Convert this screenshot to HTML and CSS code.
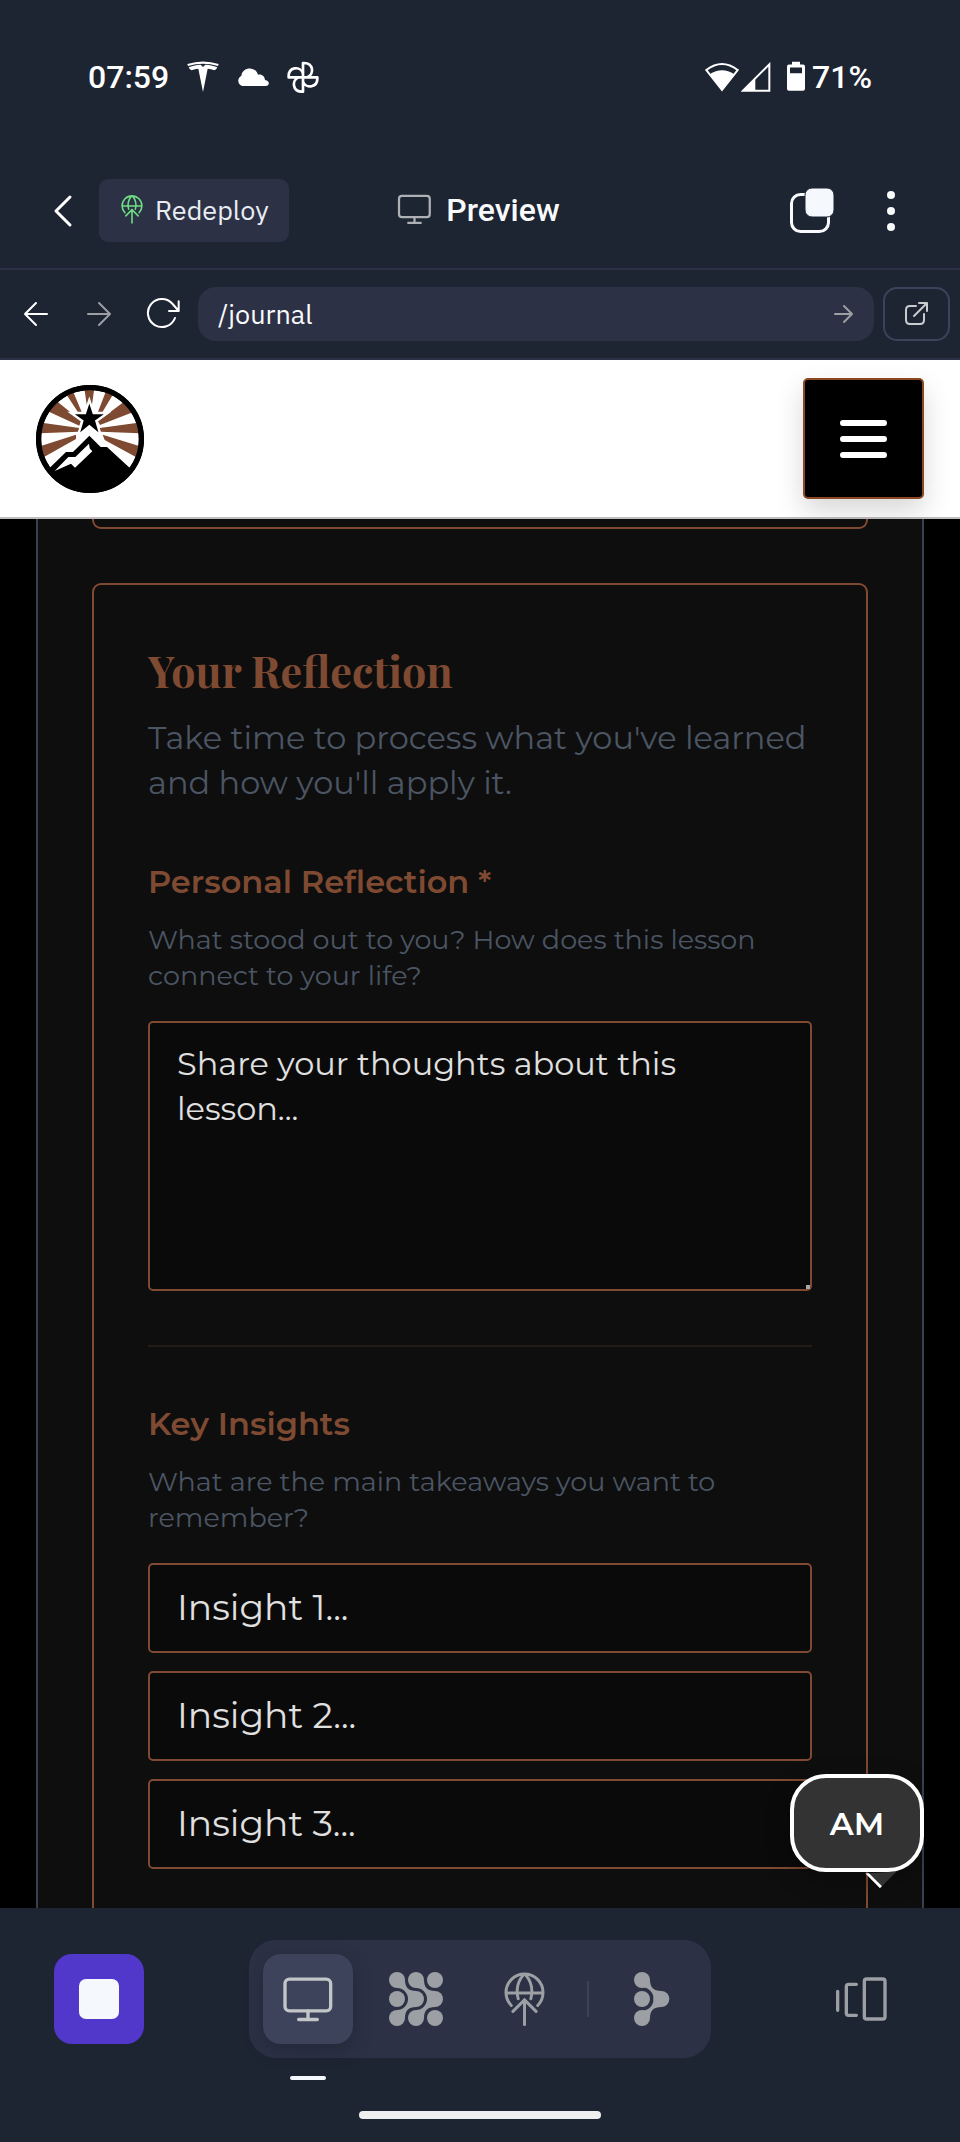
FILE: index.html
```html
<!DOCTYPE html>
<html lang="en">
<head>
<meta charset="utf-8">
<meta name="viewport" content="width=device-width, initial-scale=1">
<title>Preview - Journal</title>
<link rel="stylesheet" href="styles.css">
</head>
<body>
<svg class="sprite" aria-hidden="true">
  <symbol id="monitor" viewBox="846 224 156 146">
    <g fill="none" stroke="currentColor" stroke-width="10" stroke-linecap="round">
      <rect x="855" y="236" width="137" height="95" rx="13"/>
      <path d="M924 331V357M896 357H952"/>
    </g>
  </symbol>
  <symbol id="globe" viewBox="70 214 124 164">
    <g fill="none" stroke="currentColor" stroke-width="9" stroke-linecap="round">
      <path d="M92 314A56 56 0 1 1 172 314M77 276H187M130 220C112 240 106 268 113 294M134 220C152 240 158 268 151 294M132 372V298M97 332L132 297L167 332"/>
    </g>
  </symbol>
</svg>

<header class="status">
  <div class="status-group">
    <span class="status-text">07:59</span>
    <svg class="s-icon" viewBox="558 64 96 96" fill="#fff"><path d="M559 73Q606 58 653 73L651 79Q606 66 561 79ZM563 83Q585 74 599 75L606 82L613 75Q627 74 649 83Q646 90 640 92Q630 87 620 87L606 157L592 87Q582 87 572 92Q566 90 563 83Z"/></svg>
    <svg class="s-icon" viewBox="708 60 96 96" fill="#fff"><path d="M724 135A16 16 0 0 1 721 105C723 78 763 74 771 101C784 99 791 107 792 117C808 119 806 135 794 135Z"/></svg>
    <svg class="s-icon" viewBox="858 64 96 96" fill="none" stroke="#fff" stroke-width="8" stroke-linejoin="round"><path d="M906 113V70C938 68 941 104 919 113"/><path d="M906 113H949C951 145 915 148 906 126M906 113V156C874 158 871 122 893 113M906 113H863C861 81 897 78 906 100"/></svg>
  </div>
  <div class="status-group status-right">
    <svg class="wifi" viewBox="678 66 102 90"><path d="M682 90Q729 54 776 90L729 150Z" fill="none" stroke="#fff" stroke-width="6"/><path d="M692 103Q729 78 766 103L729 152Z" fill="#fff"/></svg>
    <svg class="signal" viewBox="788 66 90 90"><path d="M873 73V152H794Z" fill="none" stroke="#fff" stroke-width="6"/><path d="M831 117V153H794Z" fill="#fff"/></svg>
    <svg class="battery" viewBox="924 64 54 92"><path fill="#fff" fill-rule="evenodd" d="M939 66H963V74H972Q978 74 978 80V147Q978 153 972 153H930Q924 153 924 147V80Q924 74 930 74H939ZM933 83V100H969V83Z"/></svg>
    <span class="status-text">71%</span>
  </div>
</header>

<nav class="toolbar">
  <div class="tool-left">
    <button class="icon-btn back" aria-label="Back"><svg width="22" height="34" viewBox="0 0 22 34" fill="none" stroke="#fff" stroke-width="3" stroke-linecap="round" stroke-linejoin="round"><path d="M18 3L4 17L18 31"/></svg></button>
    <button class="redeploy"><svg class="globe-sm"><use href="#globe"/></svg>Redeploy</button>
  </div>
  <h1 class="title"><svg class="monitor-sm"><use href="#monitor"/></svg>Preview</h1>
  <div class="tool-right">
    <button class="icon-btn" aria-label="Windows"><svg width="44" height="46" viewBox="0 0 44 46"><rect x="1.5" y="6.500" width="37" height="37" rx="9" fill="none" stroke="#f8fafc" stroke-width="3"/><rect x="15" y="0" width="29" height="29" rx="7" fill="#f5f9fd" stroke="#1e2433" stroke-width="1"/></svg></button>
    <button class="icon-btn more" aria-label="More"><svg width="10" height="42" viewBox="0 0 10 42" fill="#f8fafc"><circle cx="5" cy="5" r="4"/><circle cx="5" cy="21" r="4"/><circle cx="5" cy="37" r="4"/></svg></button>
  </div>
</nav>

<form class="urlbar">
  <button type="button" class="nav-btn" aria-label="Previous page"><svg width="26" height="26" viewBox="0 0 26 26"><path d="M24 13H2M13 2L2 13L13 24"/></svg></button>
  <button type="button" class="nav-btn dim" aria-label="Next page"><svg width="26" height="26" viewBox="0 0 26 26"><path d="M2 13H24M13 2L24 13L13 24"/></svg></button>
  <button type="button" class="nav-btn" aria-label="Reload"><svg width="36" height="36" viewBox="433 768 108 108"><path class="reload" d="M526 834A42 42 0 1 1 519 792L537 813M537 784V813H508"/></svg></button>
  <div class="url">
    <input class="url-input" type="text" value="/journal" aria-label="Path">
    <button type="button" class="go" aria-label="Go"><svg width="20" height="20" viewBox="0 0 20 20"><path d="M1 10H18M10 2L18 10L10 18"/></svg></button>
  </div>
  <button type="button" class="external" aria-label="Open in new tab"><svg width="26" height="26" viewBox="0 0 26 26"><path d="M12 5H6Q2 5 2 9V19Q2 23 6 23H16Q20 23 20 19V13M10 15L23 2M15 2H23V10"/></svg></button>
</form>

<header class="site-header">
  <a href="#" class="logo" aria-label="Home">
    <svg viewBox="108 105 324 324">
      <clipPath id="disc"><circle cx="270" cy="267" r="150"/></clipPath>
      <circle cx="270" cy="267" r="162" fill="#000"/>
      <g clip-path="url(#disc)">
        <circle cx="270" cy="267" r="147" fill="#fff"/>
        <path fill="#7f4a32" d="M251 100H285L276 164H260ZM184 110L209 100L246 188H235ZM327 100L352 112L306 188H293ZM140 150L166 150L243 212L238 227L140 182ZM372 155L400 160L400 186L300 225L294 214ZM110 216L238 234L236 245L110 250ZM430 216L299 234L302 245L430 250ZM110 292L228 254V267L120 328ZM430 292L308 254L314 270L420 328Z"/>
        <path fill="#000" stroke="#fff" stroke-width="7" d="M268 150L281 189L323 189L289 213L302 257L268 229L234 257L247 213L213 189L255 189Z"/>
        <path fill="#fff" d="M268 231L310 269L346 300L410 372H120V370L222 276Z"/>
        <path d="M268 257L302 291H321L387 352L460 420V450H90V420L151 352L198 306H219Z"/>
        <path fill="#fff" d="M267 281L269 295L277 304L225 353L213 341L164 363L205 321H226Z"/>
      </g>
      <circle cx="270" cy="267" r="154" fill="none" stroke="#000" stroke-width="16"/>
    </svg>
  </a>
  <button class="menu" aria-label="Menu"><span class="bar"></span><span class="bar"></span><span class="bar"></span></button>
</header>

<main class="page">
  <div class="panel">
    <div class="card-end"></div>
    <section class="card">
      <h2 class="card-title">Your Reflection</h2>
      <p class="lead">Take time to process what you've learned and how you'll apply it.</p>
      <div class="field">
        <label class="label" for="reflection">Personal Reflection *</label>
        <p class="hint">What stood out to you? How does this lesson connect to your life?</p>
        <div class="area-wrap"><textarea class="area" id="reflection" placeholder="Share your thoughts about this lesson..."></textarea></div>
      </div>
      <div class="field ruled">
        <label class="label" for="insight1">Key Insights</label>
        <p class="hint">What are the main takeaways you want to remember?</p>
        <div class="inputs">
          <input class="text" id="insight1" type="text" placeholder="Insight 1...">
          <input class="text" type="text" aria-label="Insight 2" placeholder="Insight 2...">
          <input class="text" type="text" aria-label="Insight 3" placeholder="Insight 3...">
        </div>
      </div>
    </section>
  </div>
  <button class="bubble">AM</button>
</main>

<footer class="dock">
  <div class="dock-row">
    <button class="stop" aria-label="Stop"><span class="stop-mark"></span></button>
    <div class="tabs">
      <button class="tab active" aria-label="Preview"><svg width="52" height="49"><use href="#monitor"/></svg></button>
      <button class="tab" aria-label="Agent"><svg width="54" height="54" viewBox="1167 216 162 162" fill="currentColor">
        <circle cx="1191" cy="240" r="24"/><circle cx="1248" cy="240" r="24"/><circle cx="1305" cy="240" r="24"/>
        <circle cx="1191" cy="297" r="24"/><circle cx="1248" cy="297" r="24"/><circle cx="1305" cy="297" r="24"/>
        <circle cx="1191" cy="354" r="24"/><circle cx="1248" cy="354" r="24"/><circle cx="1305" cy="354" r="24"/>
        <path d="M1215 240C1215 262 1226 273 1248 273V321C1226 321 1215 332 1215 354L1191 330A33 33 0 0 0 1191 264Z"/>
        <path d="M1272 240C1272 262 1283 273 1305 273V321C1283 321 1272 332 1272 354L1248 330A33 33 0 0 0 1248 264Z"/></svg></button>
      <button class="tab" aria-label="Deploy"><svg width="41" height="55"><use href="#globe"/></svg></button>
      <span class="sep"></span>
      <button class="tab" aria-label="Workflow"><svg width="36" height="54" viewBox="463 216 108 162" fill="currentColor">
        <circle cx="487" cy="240" r="24"/><circle cx="487" cy="297" r="24"/><circle cx="487" cy="354" r="24"/><circle cx="545" cy="297" r="24"/>
        <path d="M511 240C511 262 522 273 545 273V321C522 321 511 332 511 354L487 332A35 35 0 0 0 487 262Z"/></svg></button>
    </div>
    <button class="devices" aria-label="Devices"><svg width="54" height="48" viewBox="1062 225 162 144" fill="none" stroke="currentColor" stroke-width="10" stroke-linecap="round"><path d="M1073 274V331M1129 253H1106Q1099 253 1099 260V339Q1099 346 1106 346H1129"/><rect x="1153" y="237" width="62" height="120" rx="7"/></svg></button>
  </div>
  <div class="home-bar"></div>
</footer>
</body>
</html>
```
FILE: styles.css
```css
* { box-sizing: border-box; }

body {
  margin: 0;
  min-height: 100vh;
  display: flex;
  flex-direction: column;
  background: #1d2432;
  color: #f8fafc;
  font-family: "IBM Plex Sans", Roboto, "Noto Sans", sans-serif;
}

button, input, textarea { font: inherit; color: inherit; margin: 0; }
button { padding: 0; border: 0; background: none; cursor: pointer; display: flex; align-items: center; justify-content: center; }
svg { display: block; flex: none; }
h1, h2, p { margin: 0; }
.sprite { position: absolute; width: 0; height: 0; }

/* Phone status bar */
.status { display: flex; justify-content: space-between; align-items: center; height: 153px; padding: 0 88px; }
.status-group { display: flex; align-items: center; gap: 18px; }
.status-right { gap: 2px; }
.status-text { font-family: "Google Sans", "Product Sans", Roboto, sans-serif; font-size: 32px; font-weight: 500; line-height: 38px; color: #fff; }
.s-icon { width: 32px; height: 32px; }
.wifi { width: 34px; height: 30px; }
.signal { width: 30px; height: 30px; }
.battery { width: 18px; height: 31px; margin: 0 5px 0 14px; }

/* Preview toolbar */
.toolbar { display: grid; grid-template-columns: 1fr auto 1fr; align-items: center; height: 117px; padding: 0 55px 0 52px; border-bottom: 2px solid #2c3145; }
.tool-left, .tool-right { display: flex; align-items: center; }
.tool-left { gap: 25px; }
.tool-right { justify-content: flex-end; gap: 43px; }
.more { width: 28px; }
.redeploy { height: 63px; padding: 0 20px 2px 22px; gap: 12px; border-radius: 9px; background: #2c3145; font-size: 27px; color: #e8edf3; }
.globe-sm { width: 22px; height: 29px; color: #6fdd84; }
.title { display: flex; align-items: center; gap: 14px; padding-bottom: 2px; font-family: Roboto, sans-serif; font-size: 32px; font-weight: 500; line-height: 40px; }
.monitor-sm { width: 35px; height: 33px; color: #adb1b5; }

/* Address row */
.urlbar { display: flex; align-items: center; gap: 9px; height: 90px; padding: 0 10px 0 9px; border-bottom: 2px solid #2c3145; }
.nav-btn { width: 54px; height: 54px; }
.urlbar svg { fill: none; stroke: #fff; stroke-width: 2; stroke-linecap: round; stroke-linejoin: round; }
.urlbar .reload { stroke-width: 6; }
.urlbar .dim svg, .urlbar .go svg { stroke: #9ca0a4; }
.url { flex: 1; min-width: 0; display: flex; height: 54px; border-radius: 18px; background: #2c3145; }
.url-input { flex: 1; min-width: 0; padding: 0 20px 2px; border: 0; background: none; font-size: 27px; outline: none; }
.go { width: 60px; }
.external { width: 67px; height: 54px; border: 2px solid #3b435b; border-radius: 14px; }
.urlbar .external svg { stroke: #c8cccf; }

/* Site header */
.site-header { display: flex; justify-content: space-between; align-items: center; padding: 18px 36px; background: #fff; border-bottom: 2px solid #bfbfbf; }
.logo svg { width: 108px; height: 108px; }
.menu { width: 121px; height: 121px; flex-direction: column; gap: 10px; border: 2px solid #8b4822; border-radius: 5px; background: #000; box-shadow: 0 12px 28px rgba(0, 0, 0, 0.16); }
.bar { width: 47px; height: 6px; border-radius: 3px; background: #fff; }

/* Journal page */
.page { position: relative; flex: 1; padding: 0 36px; background: #000; font-family: Montserrat, Inter, "Noto Sans", sans-serif; overflow: hidden; display: flex; }
.panel { flex: 1; min-width: 0; display: flex; flex-direction: column; padding: 0 54px; background: #0e0e0e; border: solid #374151; border-width: 0 2px; }
.card-end { height: 10px; margin-bottom: 54px; border: 2px solid #7f4a32; border-top: 0; border-radius: 0 0 9px 9px; }
.card { flex: 1; padding: 54px 54px 39px; border: 2px solid #7f4a32; border-bottom: 0; border-radius: 9px 9px 0 0; }
.card-title { margin-bottom: 13px; font-family: "Playfair Display", "Liberation Serif", serif; font-size: 43px; font-weight: 700; line-height: 63px; color: #7f4a32; }
.lead { margin-bottom: 54px; font-size: 32px; line-height: 45px; color: #4b5563; }
.label { display: block; margin-bottom: 18px; font-size: 32px; font-weight: 600; line-height: 45px; color: #7f4a32; }
.hint { margin-bottom: 27px; font-size: 27px; line-height: 36px; color: #4b5563; }
.area-wrap { position: relative; }
.area-wrap::after { content: ""; position: absolute; right: 2px; bottom: 2px; width: 4px; height: 4px; background: #a8a8a8; }
.area, .text { display: block; width: 100%; border: 2px solid #7f4a32; border-radius: 5px; background: #0a0a0a; outline: none; }
.area { height: 270px; padding: 18px 27px; font-size: 32px; line-height: 45px; resize: none; }
.ruled { margin-top: 54px; padding-top: 54px; border-top: 2px solid #231916; }
.inputs { display: flex; flex-direction: column; gap: 18px; }
.text { height: 90px; padding: 0 27px 2px; font-size: 36px; }
.area::placeholder, .text::placeholder { color: #e0e0e0; opacity: 1; }

.bubble { position: absolute; right: 36px; bottom: 36px; width: 134px; height: 98px; border: 4px solid #fff; border-radius: 36px; background: #333; font-size: 32px; font-weight: 600; color: #fff; box-shadow: 0 8px 24px rgba(0, 0, 0, 0.3); }
.bubble::after { content: ""; position: absolute; right: 27px; bottom: -15px; width: 21px; height: 21px; border-left: 3px solid #fff; background: #333; transform: rotate(-45deg); clip-path: polygon(0 0, 100% 100%, 0 100%); }

/* Bottom dock */
.dock { padding: 32px 54px 23px; }
.dock-row { display: flex; align-items: center; justify-content: space-between; }
.stop { width: 90px; height: 90px; border-radius: 18px; background: #5138ca; }
.stop-mark { width: 40px; height: 40px; border-radius: 7px; background: #f5f9fd; }
.tabs { display: flex; align-items: center; gap: 18px; padding: 14px; border-radius: 27px; background: #2c3145; color: #9ca0a4; }
.tab { position: relative; width: 90px; height: 90px; border-radius: 18px; }
.active { background: #3c435b; color: #c2c6c8; box-shadow: 0 6px 18px rgba(20, 24, 38, 0.35); }
.active::after { content: ""; position: absolute; left: 27px; bottom: -36px; width: 36px; height: 4px; border-radius: 2px; background: #f5f9fd; }
.sep { width: 2px; height: 36px; background: #3b435b; }
.devices { width: 90px; height: 90px; color: #9ca0a4; }
.home-bar { width: 242px; height: 8px; margin: 53px auto 0; border-radius: 4px; background: #efefef; }
```
